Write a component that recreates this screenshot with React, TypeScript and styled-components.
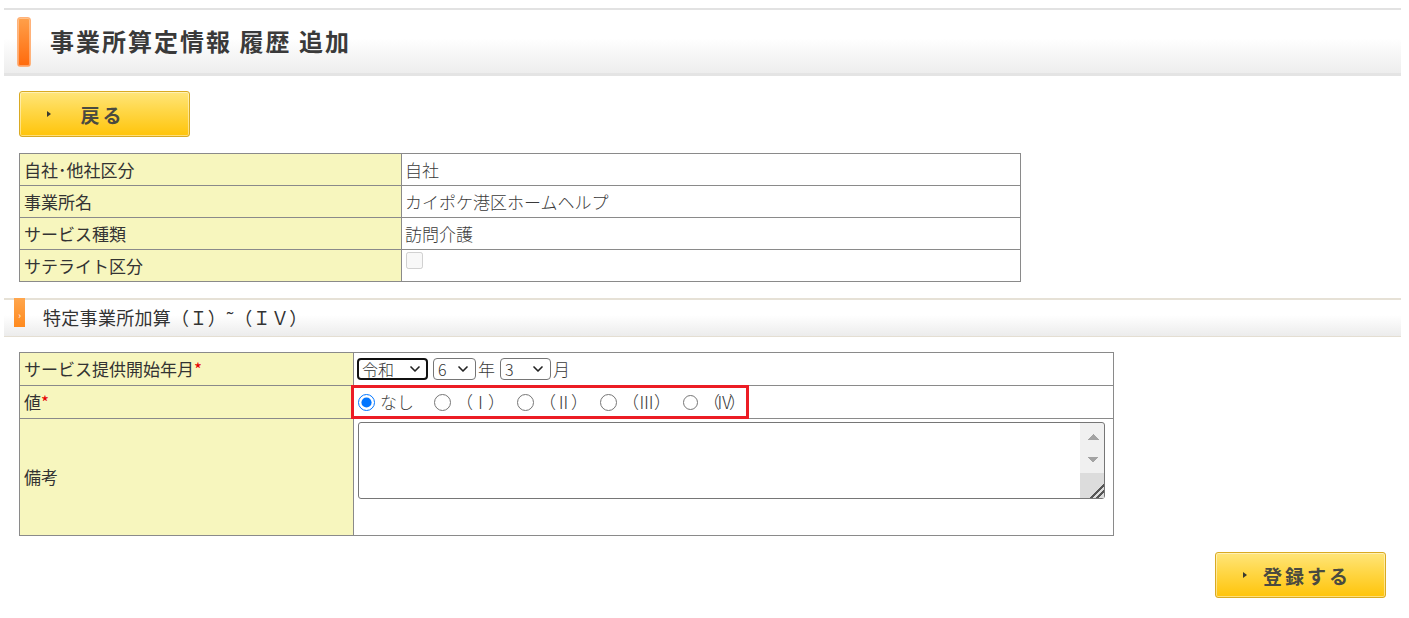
import React from 'react';
import styled, { createGlobalStyle } from 'styled-components';
import { ChevronDown } from 'lucide-react';

const GlobalStyle = createGlobalStyle`
  html, body { margin: 0; padding: 0; background: #fff; }
  body {
    font-family: "Noto Sans CJK JP", "Noto Sans", sans-serif;
    color: #333;
  }
  * { box-sizing: border-box; }
`;

const Page = styled.div`
  padding: 8px 8px 20px 4px;
`;

const PageHeader = styled.div`
  display: flex;
  align-items: center;
  gap: 19px;
  height: 68px;
  padding-left: 13px;
  border-top: 2px solid #e2e2e2;
  border-bottom: 3px solid #e4e4e4;
  background: linear-gradient(#ffffff 0%, #ffffff 45%, #ededed 100%);
`;

const HeaderBar = styled.span`
  display: block;
  width: 14px;
  height: 50px;
  border-radius: 3px;
  border: 1px solid #ffb27a;
  background: linear-gradient(#ffa04a, #ff6a0c);
  box-shadow: inset 0 0 0 1px rgba(255, 255, 255, 0.35);
`;

const Title = styled.h1`
  margin: 0 0 2px;
  font-size: 24px;
  font-weight: 700;
  letter-spacing: 2px;
  color: #3a3a3a;
`;

const Content = styled.div`
  padding: 0 15px;
`;

const YellowButton = styled.button`
  position: relative;
  display: flex;
  align-items: center;
  justify-content: center;
  width: 171px;
  height: 46px;
  padding: 0 4px 0 0;
  border: 1px solid #d9aa22;
  border-radius: 3px;
  background: linear-gradient(#ffe57a 0%, #ffd84a 40%, #ffc40a 100%);
  box-shadow: inset 0 0 0 1px rgba(255, 255, 255, 0.45);
  font-family: "Noto Sans CJK JP", sans-serif;
  font-size: 19px;
  font-weight: 700;
  letter-spacing: 3px;
  color: #4a4a40;
  cursor: pointer;
  &::before {
    content: "";
    position: absolute;
    left: 27px;
    top: 50%;
    margin-top: -3px;
    border-left: 4px solid #3a3a30;
    border-top: 3px solid transparent;
    border-bottom: 3px solid transparent;
  }
`;

const BackButton = styled(YellowButton)`
  margin-top: 15px;
`;

const Table = styled.table<{ $w: number }>`
  width: ${(p) => p.$w}px;
  border-collapse: collapse;
  font-size: 17px;
  table-layout: fixed;
`;

const InfoTable = styled(Table)`
  margin-top: 16px;
`;

const FormTable = styled(Table)`
  margin-top: 15px;
  & tr:not(:last-child) > * {
    height: 33px;
  }
`;

const Label = styled.th<{ $w: number }>`
  width: ${(p) => p.$w}px;
  padding: 0 4px;
  height: 32px;
  line-height: 24px;
  text-align: left;
  font-weight: 400;
  color: #333;
  background: #f7f6be;
  border: 1px solid #8a8a8a;
  vertical-align: middle;
`;

const Value = styled.td`
  padding: 0 3px;
  height: 32px;
  line-height: 24px;
  color: #3a3a3a;
  font-weight: 300;
  border: 1px solid #8a8a8a;
  vertical-align: middle;
`;

const CheckCell = styled(Value)`
  vertical-align: top;
  padding-top: 2px;
`;

const NotesCell = styled(Value)`
  vertical-align: top;
  padding: 3px 3px;
  height: 117px;
`;

const Check = styled.input`
  display: block;
  width: 17px;
  height: 17px;
  margin: 0 0 0 1px;
`;

const Required = styled.span`
  color: #e60000;
  font-weight: 400;
`;

const SectionHeader = styled.div`
  display: flex;
  align-items: flex-start;
  gap: 18px;
  height: 39px;
  margin-top: 16px;
  padding-left: 10px;
  border-bottom: 1px solid #e4ded2;
  background: linear-gradient(#e6e1d6 0, #e6e1d6 2px, #ffffff 2px, #ffffff 45%, #ececec 100%);
`;

const SectionBar = styled.span`
  display: flex;
  align-items: center;
  justify-content: center;
  width: 11px;
  height: 29px;
  padding-top: 6px;
  background: linear-gradient(#ffa64d, #ff8a1e);
  color: #fff;
  font-size: 9px;
  line-height: 1;
`;

const SectionTitle = styled.h2`
  margin: 0;
  align-self: center;
  font-size: 18px;
  font-weight: 400;
  color: #333;
  letter-spacing: 0.3px;
`;

const DateRow = styled.div`
  display: flex;
  align-items: center;
  gap: 1px;
`;

const SelectWrap = styled.span<{ $gap: number }>`
  position: relative;
  display: inline-flex;
  margin-right: ${(p) => p.$gap}px;
  & > svg {
    position: absolute;
    right: 5px;
    top: 50%;
    margin-top: -8px;
    pointer-events: none;
    color: #222;
  }
`;

const Select = styled.select<{ $w: number; $focus?: boolean }>`
  appearance: none;
  width: ${(p) => p.$w}px;
  height: 22px;
  padding: 0 0 0 ${(p) => (p.$focus ? 3 : 4)}px;
  font-family: "Noto Sans CJK JP", sans-serif;
  font-size: 16px;
  font-weight: 300;
  line-height: 18px;
  color: #333;
  background: #fff;
  border: ${(p) => (p.$focus ? '2px solid #111' : '1px solid #767676')};
  border-radius: 4px;
`;

const Unit = styled.span`
  margin-right: 4px;
`;

const RadioGroup = styled.div`
  display: grid;
  grid-template-columns: 76px 83px 83px 83px 59px;
  align-items: center;
  width: 384px;
  height: 20px;
  margin: 2px 0 2px 1px;
  outline: 3px solid #ec1c24;
  outline-offset: 4px;
`;

const RadioItem = styled.label`
  display: flex;
  align-items: center;
  white-space: nowrap;
  line-height: 20px;
`;

const Radio = styled.input`
  width: 17px;
  height: 17px;
  margin: 0 5px 0 0;
`;

const Roman = styled.span<{ $tight?: boolean }>`
  letter-spacing: ${(p) => (p.$tight ? '-4px' : '-1px')};
`;

const tri = '#a3a3a3';

const Notes = styled.textarea`
  display: block;
  width: 747px;
  height: 77px;
  margin: 0 0 0 1px;
  padding: 2px 26px 2px 3px;
  border: 1px solid #767676;
  border-radius: 3px;
  font-family: "Noto Sans CJK JP", sans-serif;
  font-size: 16px;
  background-color: #fff;
  background-image:
    linear-gradient(to top left, ${tri} 50%, transparent 50%),
    linear-gradient(to top right, ${tri} 50%, transparent 50%),
    linear-gradient(to bottom left, ${tri} 50%, transparent 50%),
    linear-gradient(to bottom right, ${tri} 50%, transparent 50%),
    linear-gradient(#f0f0f0, #f0f0f0),
    linear-gradient(#dcdcdc, #dcdcdc);
  background-repeat: no-repeat;
  background-size: 6px 6px, 6px 6px, 6px 6px, 6px 6px, 24px 50px, 24px 100%;
  background-position:
    right 11px top 11px,
    right 5px top 11px,
    right 11px top 34px,
    right 5px top 34px,
    right 0 top 0,
    right 0 top 0;

  &::-webkit-resizer {
    background: linear-gradient(
      135deg,
      #dcdcdc 52%,
      #555 52%,
      #555 60%,
      #dcdcdc 60%,
      #dcdcdc 72%,
      #555 72%,
      #555 80%,
      #dcdcdc 80%
    );
  }
`;

const Actions = styled.div`
  display: flex;
  justify-content: flex-end;
  margin-top: 16px;
`;

const RegisterButton = styled(YellowButton)`
  padding: 0 0 0 13px;
`;

export default function App() {
  return (
    <>
      <GlobalStyle />
      <Page>
        <PageHeader>
          <HeaderBar />
          <Title>事業所算定情報 履歴 追加</Title>
        </PageHeader>
        <Content>
          <BackButton type="button">戻る</BackButton>
          <InfoTable $w={1002}>
            <tbody>
              <tr>
                <Label $w={382}>自社･他社区分</Label>
                <Value>自社</Value>
              </tr>
              <tr>
                <Label $w={382}>事業所名</Label>
                <Value>カイポケ港区ホームヘルプ</Value>
              </tr>
              <tr>
                <Label $w={382}>サービス種類</Label>
                <Value>訪問介護</Value>
              </tr>
              <tr>
                <Label $w={382}>サテライト区分</Label>
                <CheckCell>
                  <Check type="checkbox" disabled />
                </CheckCell>
              </tr>
            </tbody>
          </InfoTable>
        </Content>
        <SectionHeader>
          <SectionBar>›</SectionBar>
          <SectionTitle>特定事業所加算（Ｉ）˜（ＩＶ）</SectionTitle>
        </SectionHeader>
        <Content>
          <FormTable $w={1095}>
            <tbody>
              <tr>
                <Label $w={334}>
                  サービス提供開始年月<Required>*</Required>
                </Label>
                <Value>
                  <DateRow>
                    <SelectWrap $gap={4}>
                      <Select $w={71} $focus defaultValue="令和">
                        <option>令和</option>
                        <option>平成</option>
                      </Select>
                      <ChevronDown size={16} strokeWidth={2.5} />
                    </SelectWrap>
                    <SelectWrap $gap={1}>
                      <Select $w={43} defaultValue="6">
                        {[1, 2, 3, 4, 5, 6, 7].map((n) => (
                          <option key={n}>{n}</option>
                        ))}
                      </Select>
                      <ChevronDown size={16} strokeWidth={2.5} />
                    </SelectWrap>
                    <Unit>年</Unit>
                    <SelectWrap $gap={1}>
                      <Select $w={51} defaultValue="3">
                        {[1, 2, 3, 4, 5, 6, 7, 8, 9, 10, 11, 12].map((n) => (
                          <option key={n}>{n}</option>
                        ))}
                      </Select>
                      <ChevronDown size={16} strokeWidth={2.5} />
                    </SelectWrap>
                    <span>月</span>
                  </DateRow>
                </Value>
              </tr>
              <tr>
                <Label $w={334}>
                  値<Required>*</Required>
                </Label>
                <Value>
                  <RadioGroup>
                    <RadioItem>
                      <Radio type="radio" name="val" defaultChecked />
                      なし
                    </RadioItem>
                    <RadioItem>
                      <Radio type="radio" name="val" />
                      <Roman>（Ⅰ）</Roman>
                    </RadioItem>
                    <RadioItem>
                      <Radio type="radio" name="val" />
                      <Roman>（Ⅱ）</Roman>
                    </RadioItem>
                    <RadioItem>
                      <Radio type="radio" name="val" />
                      <Roman>（Ⅲ）</Roman>
                    </RadioItem>
                    <RadioItem>
                      <Radio type="radio" name="val" />
                      <Roman $tight>（Ⅳ）</Roman>
                    </RadioItem>
                  </RadioGroup>
                </Value>
              </tr>
              <tr>
                <Label $w={334}>備考</Label>
                <NotesCell>
                  <Notes />
                </NotesCell>
              </tr>
            </tbody>
          </FormTable>
          <Actions>
            <RegisterButton type="button">登録する</RegisterButton>
          </Actions>
        </Content>
      </Page>
    </>
  );
}
